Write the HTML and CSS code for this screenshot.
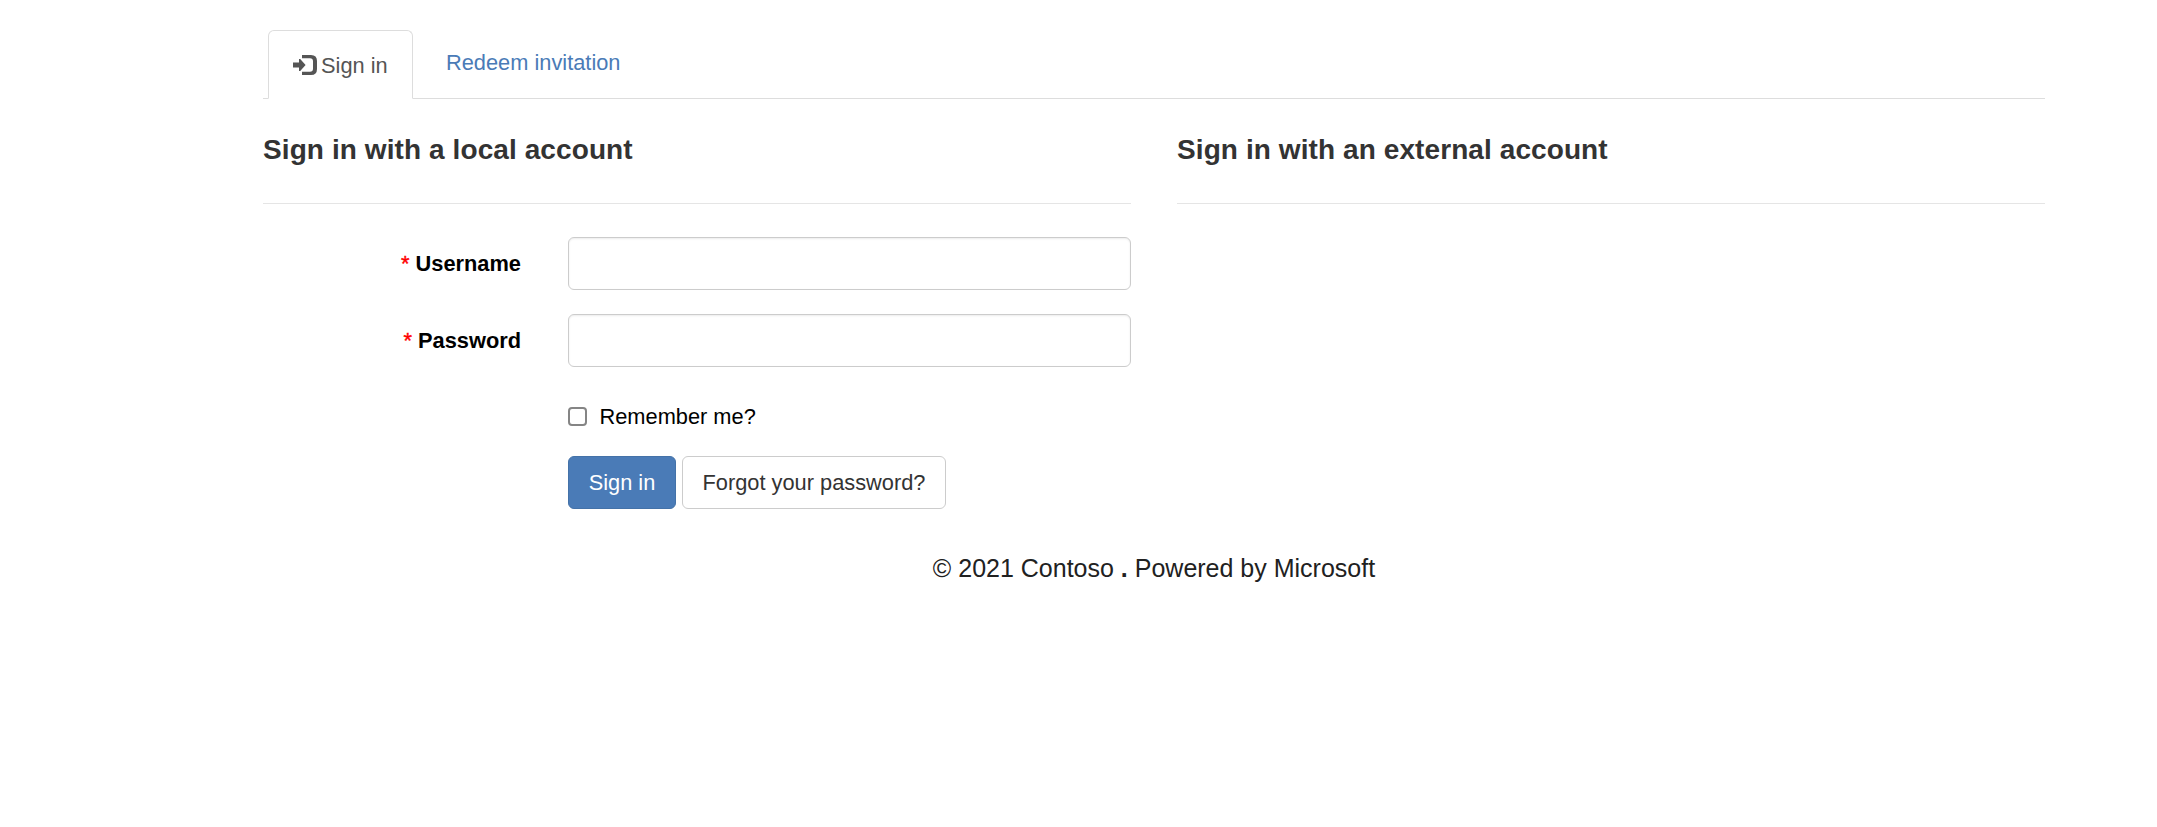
FILE: index.html
```html
<!DOCTYPE html>
<html lang="en">
<head>
<meta charset="utf-8">
<title>Sign in</title>
<link rel="stylesheet" href="styles.css">
</head>
<body>
<div class="container">
  <nav class="tabs">
    <a class="tab active"><svg class="icon" viewBox="0 0 24 20" aria-hidden="true"><path fill="#555" d="M0 7.6h6V4h1.2l5.4 6-5.4 6H6v-3.6H0z"/><path fill="#555" d="M9 0h9q6 0 6 6v8q0 6-6 6H9v-3.2h8q3 0 3-3V6.200q0-3-3-3H9z"/></svg><span>Sign in</span></a>
    <a class="tab redeem">Redeem invitation</a>
  </nav>
  <div class="columns">
    <section>
      <h2>Sign in with a local account</h2>
      <form>
        <div class="row"><label for="user"><i>*</i> Username</label><input class="field" id="user" type="text"></div>
        <div class="row"><label for="pass"><i>*</i> Password</label><input class="field" id="pass" type="password"></div>
        <label class="remember"><input class="check" type="checkbox"><span>Remember me?</span></label>
        <div class="actions"><button class="btn primary" type="button">Sign in</button><button class="btn" type="button">Forgot your password?</button></div>
      </form>
    </section>
    <section><h2>Sign in with an external account</h2></section>
  </div>
  <footer>© 2021 Contoso <b>.</b> Powered by Microsoft</footer>
</div>
</body>
</html>
```
FILE: styles.css
```css
* { box-sizing: border-box; }
body {
  margin: 0;
  background: #fff;
  color: #000;
  font: 21.8px/30px "Liberation Sans", Arial, sans-serif;
}
.container { width: 1782px; margin-left: 263px; padding-top: 30px; }
.tabs { display: flex; height: 69px; padding-left: 5px; border-bottom: 1px solid #ddd; }
.tab { height: 69px; color: #4a7bb7; }
.active {
  display: flex;
  width: 145px;
  padding: 20px 0 0 24px;
  border: 1px solid #ddd;
  border-bottom-color: #fff;
  border-radius: 6px 6px 0 0;
  background: #fff;
  color: #555;
}
.icon { width: 24px; height: 20px; margin: 4px 4px 0 0; flex: none; }
.redeem { padding: 18px 0 0 33px; }
.columns { display: grid; grid-template-columns: 868px 868px; column-gap: 46px; }
h2 {
  height: 105px;
  margin: 0;
  padding-top: 35px;
  border-bottom: 1px solid #e5e5e5;
  color: #333;
  font-size: 28px;
  line-height: 32px;
  letter-spacing: .09px;
}
form { padding-top: 33px; }
.row { display: grid; grid-template-columns: 258px 563px; column-gap: 47px; margin-bottom: 24px; }
.row label { padding-top: 12px; text-align: right; font-weight: bold; }
.row i { color: #f00; font-style: normal; font-weight: normal; -webkit-text-stroke: .4px #f00; }
.field {
  height: 53px;
  border: 1px solid #ccc;
  border-radius: 6px;
  box-shadow: inset 0 1px 2px rgba(0, 0, 0, .075);
  font: inherit;
  padding: 8px 18px;
}
.remember { display: flex; margin: 35px 0 0 305px; height: 35px; }
.check {
  appearance: none;
  width: 19px;
  height: 19px;
  margin: 5px 12px 0 0;
  border: 2px solid #858585;
  border-radius: 4px;
  background: #fff;
}
.remember span { padding-left: .5px; }
.actions { display: flex; gap: 6px; margin: 19px 0 0 305px; }
.btn {
  width: 264px;
  height: 53px;
  padding: 0;
  border: 1px solid #ccc;
  border-radius: 6px;
  background: #fff;
  color: #333;
  font: inherit;
  white-space: nowrap;
}
.primary { width: 108px; border-color: #4472a8; background: #4a7bb7; color: #fff; }
footer { margin-top: 42px; color: #212121; text-align: center; font-size: 25px; line-height: 34px; }
```
